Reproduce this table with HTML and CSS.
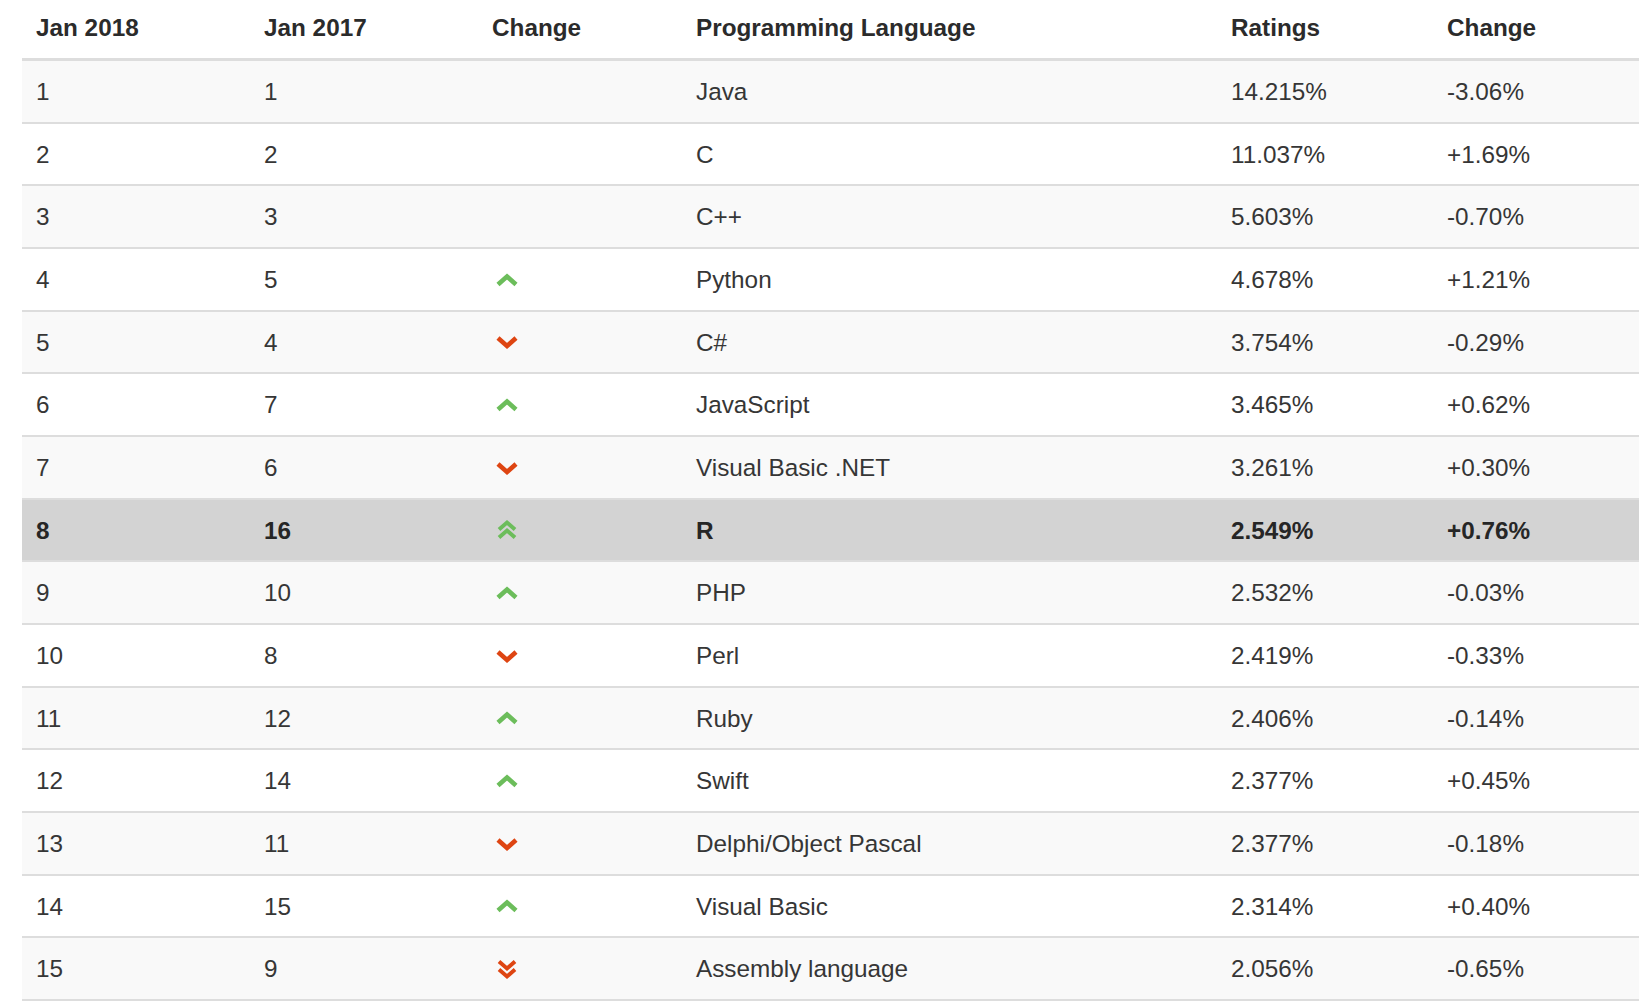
FILE: index.html
```html
<!DOCTYPE html>
<html lang="en">
<head>
<meta charset="utf-8">
<title>TIOBE Index January 2018</title>
<link rel="stylesheet" href="styles.css">
</head>
<body>
<svg class="defs" width="0" height="0" aria-hidden="true">
  <defs>
    <symbol id="up" viewBox="0 0 22 22"><polyline points="2,15.5 11,7.5 20,15.5" fill="none" stroke-width="4.6"/></symbol>
    <symbol id="down" viewBox="0 0 22 22"><polyline points="2,7 11,15 20,7" fill="none" stroke-width="4.6"/></symbol>
    <symbol id="up2" viewBox="0 0 22 22"><polyline points="3,10.5 11,3.5 19,10.5" fill="none" stroke-width="3.9"/><polyline points="3,18.5 11,11.5 19,18.5" fill="none" stroke-width="3.9"/></symbol>
    <symbol id="down2" viewBox="0 0 22 22"><polyline points="3,3.5 11,10.5 19,3.5" fill="none" stroke-width="3.9"/><polyline points="3,11.5 11,18.5 19,11.5" fill="none" stroke-width="3.9"/></symbol>
  </defs>
</svg>
<table class="rank">
  <colgroup>
    <col class="c1"><col class="c2"><col class="c3"><col class="c4"><col class="c5"><col class="c6">
  </colgroup>
  <thead>
    <tr><th>Jan 2018</th><th>Jan 2017</th><th>Change</th><th>Programming Language</th><th>Ratings</th><th>Change</th></tr>
  </thead>
  <tbody>
    <tr><td>1</td><td>1</td><td></td><td>Java</td><td>14.215%</td><td>-3.06%</td></tr>
    <tr><td>2</td><td>2</td><td></td><td>C</td><td>11.037%</td><td>+1.69%</td></tr>
    <tr><td>3</td><td>3</td><td></td><td>C++</td><td>5.603%</td><td>-0.70%</td></tr>
    <tr><td>4</td><td>5</td><td><svg class="ico up"><use href="#up"/></svg></td><td>Python</td><td>4.678%</td><td>+1.21%</td></tr>
    <tr><td>5</td><td>4</td><td><svg class="ico down"><use href="#down"/></svg></td><td>C#</td><td>3.754%</td><td>-0.29%</td></tr>
    <tr><td>6</td><td>7</td><td><svg class="ico up"><use href="#up"/></svg></td><td>JavaScript</td><td>3.465%</td><td>+0.62%</td></tr>
    <tr><td>7</td><td>6</td><td><svg class="ico down"><use href="#down"/></svg></td><td>Visual Basic .NET</td><td>3.261%</td><td>+0.30%</td></tr>
    <tr class="hl"><td>8</td><td>16</td><td><svg class="ico up"><use href="#up2"/></svg></td><td>R</td><td>2.549%</td><td>+0.76%</td></tr>
    <tr><td>9</td><td>10</td><td><svg class="ico up"><use href="#up"/></svg></td><td>PHP</td><td>2.532%</td><td>-0.03%</td></tr>
    <tr><td>10</td><td>8</td><td><svg class="ico down"><use href="#down"/></svg></td><td>Perl</td><td>2.419%</td><td>-0.33%</td></tr>
    <tr><td>11</td><td>12</td><td><svg class="ico up"><use href="#up"/></svg></td><td>Ruby</td><td>2.406%</td><td>-0.14%</td></tr>
    <tr><td>12</td><td>14</td><td><svg class="ico up"><use href="#up"/></svg></td><td>Swift</td><td>2.377%</td><td>+0.45%</td></tr>
    <tr><td>13</td><td>11</td><td><svg class="ico down"><use href="#down"/></svg></td><td>Delphi/Object Pascal</td><td>2.377%</td><td>-0.18%</td></tr>
    <tr><td>14</td><td>15</td><td><svg class="ico up"><use href="#up"/></svg></td><td>Visual Basic</td><td>2.314%</td><td>+0.40%</td></tr>
    <tr><td>15</td><td>9</td><td><svg class="ico down"><use href="#down2"/></svg></td><td>Assembly language</td><td>2.056%</td><td>-0.65%</td></tr>
  </tbody>
</table>
</body>
</html>
```
FILE: styles.css
```css
html, body {
  margin: 0;
  padding: 0;
  background: #ffffff;
}
body {
  font-family: "Liberation Sans", Arial, sans-serif;
  font-size: 24.3px;
  color: #363636;
}
.defs {
  position: absolute;
  width: 0;
  height: 0;
  overflow: hidden;
}
.rank {
  margin-left: 22px;
  width: 1617px;
  table-layout: fixed;
  border-collapse: separate;
  border-spacing: 0;
}
.c1 { width: 228px; }
.c2 { width: 228px; }
.c3 { width: 204px; }
.c4 { width: 535px; }
.c5 { width: 216px; }
.c6 { width: 206px; }
.rank th {
  text-align: left;
  font-weight: bold;
  color: #2b2b2b;
  padding: 0 14px 2px 14px;
  line-height: 56px;
  border-bottom: 3px solid #dddddd;
  white-space: nowrap;
}
.rank td {
  padding: 2px 14px 0 14px;
  line-height: 58.67px;
  height: 58.67px;
  border-bottom: 2px solid #dddddd;
  vertical-align: middle;
  white-space: nowrap;
}
.rank tbody tr:nth-child(odd) td {
  background: #f9f9f9;
}
.rank tbody tr.hl td {
  background: #d3d3d3;
  font-weight: bold;
  color: #262626;
}
.ico {
  width: 22px;
  height: 22px;
  margin-left: 4px;
  vertical-align: middle;
  position: relative;
  top: -2px;
}
.ico.up { stroke: #6cbd5b; }
.ico.down { stroke: #de4512; }
```
